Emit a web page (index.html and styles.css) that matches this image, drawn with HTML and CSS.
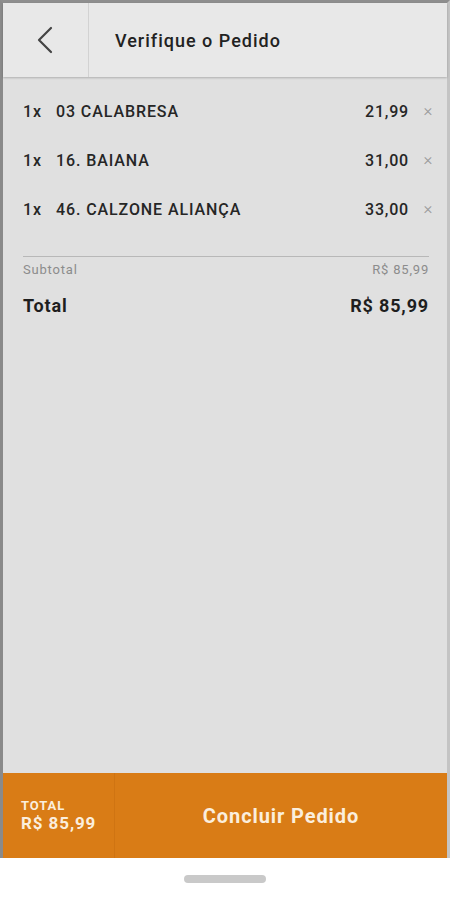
FILE: index.html
```html
<!DOCTYPE html>
<html lang="pt-BR">
<head>
<meta charset="utf-8">
<title>Verifique o Pedido</title>
<link rel="stylesheet" href="styles.css">
</head>
<body>
<div class="frame">
  <header class="topbar">
    <div class="back">
      <svg width="20" height="30" viewBox="0 0 20 30"><path d="M16 3 L4 15 L16 27" fill="none" stroke="#444" stroke-width="2.2" stroke-linecap="round" stroke-linejoin="round"/></svg>
    </div>
    <h1 class="title">Verifique o Pedido</h1>
  </header>
  <main class="content">
    <ul class="items">
      <li class="item"><span class="qty">1x</span><span class="name">03 CALABRESA</span><span class="price">21,99</span><span class="remove">×</span></li>
      <li class="item"><span class="qty">1x</span><span class="name">16. BAIANA</span><span class="price">31,00</span><span class="remove">×</span></li>
      <li class="item"><span class="qty">1x</span><span class="name">46. CALZONE ALIANÇA</span><span class="price">33,00</span><span class="remove">×</span></li>
    </ul>
    <div class="summary">
      <div class="sub"><span>Subtotal</span><span>R$ 85,99</span></div>
      <div class="total"><span>Total</span><span>R$ 85,99</span></div>
    </div>
  </main>
  <footer class="bottombar">
    <div class="sum">
      <span class="sum-label">TOTAL</span>
      <span class="sum-value">R$ 85,99</span>
    </div>
    <div class="confirm">Concluir Pedido</div>
  </footer>
</div>
<div class="home"><span class="pill"></span></div>
</body>
</html>
```
FILE: styles.css
```css
* { box-sizing: border-box; }
html, body { margin: 0; padding: 0; }
body {
  width: 450px;
  height: 900px;
  background: #ffffff;
  font-family: Roboto, "Noto Sans", sans-serif;
  color: #222;
  overflow: hidden;
}
.frame {
  height: 858px;
  display: flex;
  flex-direction: column;
  border-top: 3px solid #8e8e8e;
  border-left: 3px solid #8a8a8a;
  border-right: 3px solid #c4c4c4;
  background: #e0e0e0;
}
.topbar {
  height: 74px;
  flex: none;
  display: flex;
  align-items: stretch;
  background: #e8e8e8;
  box-shadow: 0 1px 2px rgba(0,0,0,0.22);
  position: relative;
  z-index: 1;
}
.back {
  width: 86px;
  display: flex;
  align-items: center;
  justify-content: center;
  border-right: 1px solid #d2d2d2;
  padding-right: 2px;
}
.title {
  margin: 0;
  padding-left: 26px;
  display: flex;
  align-items: center;
  font-size: 18px;
  font-weight: 500;
  letter-spacing: 1px;
  color: #222;
}
.content { flex: 1; }
.items {
  list-style: none;
  margin: 0;
  padding: 10px 7px 0 20px;
}
.item {
  height: 49px;
  display: flex;
  align-items: center;
  font-size: 16px;
  font-weight: 500;
  color: #262626;
  letter-spacing: 0.9px;
}
.qty { width: 33px; }
.name { flex: 1; }
.price { margin-right: 7px; letter-spacing: 0.8px; }
.remove {
  width: 24px;
  text-align: center;
  color: #9a9a9a;
  font-size: 17px;
  font-weight: 300;
  letter-spacing: 0;
  padding-bottom: 4px;
}
.summary {
  margin: 22px 18px 0 20px;
  border-top: 1px solid #b8b8b8;
}
.sub {
  display: flex;
  justify-content: space-between;
  padding-top: 5px;
  font-size: 13px;
  line-height: 16px;
  letter-spacing: 0.8px;
  color: #8c8c8c;
}
.total {
  display: flex;
  justify-content: space-between;
  margin-top: 17px;
  font-size: 18px;
  font-weight: 700;
  line-height: 22px;
  letter-spacing: 0.85px;
  color: #1e1e1e;
}
.bottombar {
  height: 85px;
  flex: none;
  display: flex;
  background: #d97c16;
  color: #fbeedd;
}
.sum {
  width: 112px;
  padding-left: 18px;
  display: flex;
  flex-direction: column;
  justify-content: center;
  border-right: 1px solid #cf7412;
  font-weight: 700;
  letter-spacing: 0.9px;
}
.sum-label { font-size: 13px; line-height: 15px; }
.sum-value { font-size: 17px; line-height: 20px; }
.confirm {
  flex: 1;
  display: flex;
  align-items: center;
  justify-content: center;
  font-size: 20px;
  font-weight: 700;
  letter-spacing: 0.9px;
}
.home {
  height: 42px;
  display: flex;
  justify-content: center;
  padding-top: 17px;
}
.pill {
  width: 82px;
  height: 8px;
  border-radius: 4px;
  background: #c9c9c9;
}
```
